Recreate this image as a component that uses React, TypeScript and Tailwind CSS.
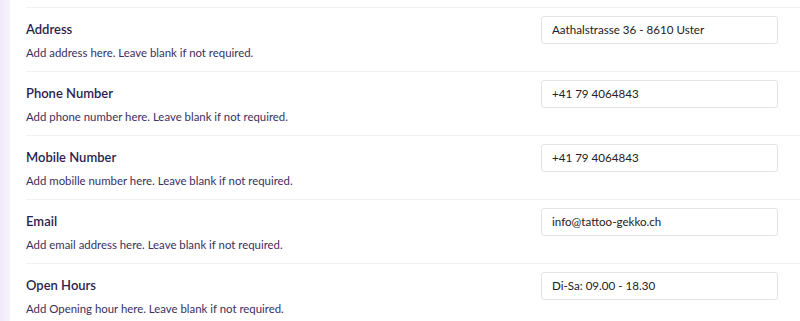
import React from "react";

const rows = [
  { title: "Address", desc: "Add address here. Leave blank if not required.", value: "Aathalstrasse 36 - 8610 Uster" },
  { title: "Phone Number", desc: "Add phone number here. Leave blank if not required.", value: "+41 79 4064843" },
  { title: "Mobile Number", desc: "Add mobille number here. Leave blank if not required.", value: "+41 79 4064843" },
  { title: "Email", desc: "Add email address here. Leave blank if not required.", value: "info@tattoo-gekko.ch" },
  { title: "Open Hours", desc: "Add Opening hour here. Leave blank if not required.", value: "Di-Sa: 09.00 - 18.30" },
];

export default function App() {
  return (
    <div className="flex h-[321px] w-[800px] overflow-hidden bg-white" style={{ fontFamily: "Lato, 'Noto Sans', sans-serif" }}>
      <div className="w-[10px] shrink-0 bg-gradient-to-r from-[#efe9fb] to-[#f7f4fd]" />
      <div className="flex-1 pl-[16px]">
        <div className="h-[7px]" />
        {rows.map((r) => (
          <div key={r.title} className="flex h-[64px] border-t border-[#f1f0f4]">
            <div className="flex-1 pt-[13px]">
              <div className="text-[13px] font-semibold leading-[16px] text-[#2a1f4f]">{r.title}</div>
              <div className="mt-[9px] text-[11.4px] leading-[14px] text-[#3b2f61]">{r.desc}</div>
            </div>
            <div className="pt-[8px] pr-[22px]">
              <div className="flex h-[28px] w-[237px] items-center rounded-[3px] border border-[#e3e3e6] px-[10px] text-[11.6px] text-[#222]">
                {r.value}
              </div>
            </div>
          </div>
        ))}
      </div>
    </div>
  );
}
